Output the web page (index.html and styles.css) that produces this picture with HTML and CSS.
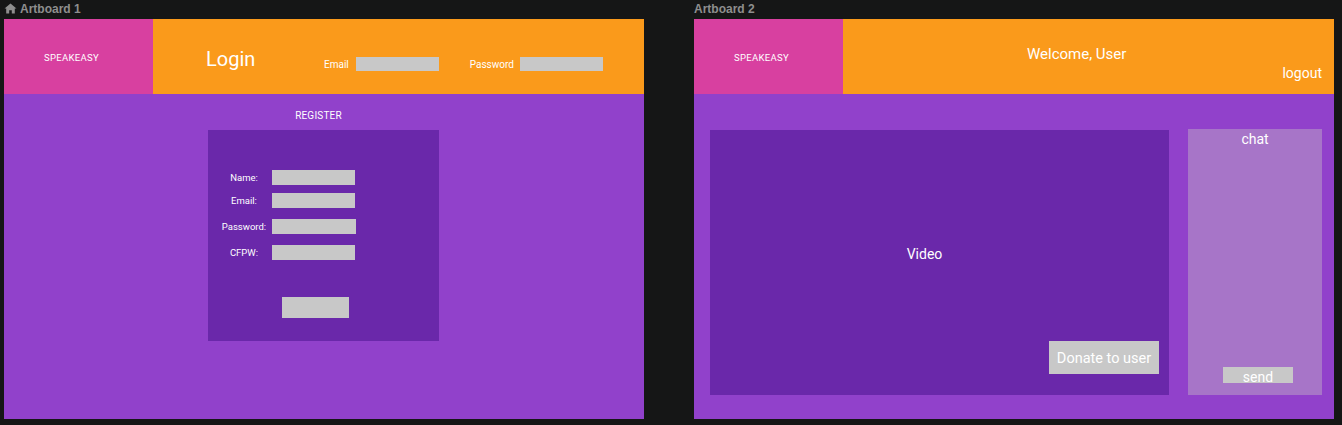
FILE: index.html
```html
<!DOCTYPE html>
<html>
<head>
<meta charset="utf-8">
<link rel="stylesheet" href="styles.css">
</head>
<body>
<div class="canvas">
  <section class="board">
    <div class="board-label">
      <svg class="home" width="13" height="11" viewBox="0 0 13 11"><path d="M6.5 0.5 L0.5 5.5 H2.2 V10.5 H5.2 V7.2 H7.8 V10.5 H10.8 V5.5 H12.5 Z" fill="#8e8e8e"/></svg>
      <span>Artboard 1</span>
    </div>
    <div class="frame">
      <header class="top">
        <div class="brand">SPEAKEASY</div>
        <div class="bar bar-login">
          <div class="login-title">Login</div>
          <div class="field field-email"><span>Email</span><div class="input"></div></div>
          <div class="field field-pass"><span>Password</span><div class="input"></div></div>
        </div>
      </header>
      <main class="content content-login">
        <div class="register">
          <div class="register-title">REGISTER</div>
          <div class="register-box">
            <div class="rows">
              <div class="row r1"><span class="lbl">Name:</span><div class="input"></div></div>
              <div class="row r2"><span class="lbl">Email:</span><div class="input"></div></div>
              <div class="row r3"><span class="lbl">Password:</span><div class="input wide"></div></div>
              <div class="row r4"><span class="lbl">CFPW:</span><div class="input"></div></div>
            </div>
            <div class="submit"></div>
          </div>
        </div>
      </main>
    </div>
  </section>

  <section class="board">
    <div class="board-label"><span>Artboard 2</span></div>
    <div class="frame">
      <header class="top">
        <div class="brand">SPEAKEASY</div>
        <div class="bar bar-user">
          <div class="welcome">Welcome, User</div>
          <div class="logout">logout</div>
        </div>
      </header>
      <main class="content content-stream">
        <div class="video">
          <div class="video-label">Video</div>
          <div class="donate">Donate to user</div>
        </div>
        <div class="chat">
          <div class="chat-title">chat</div>
          <div class="send">send</div>
        </div>
      </main>
    </div>
  </section>
</div>
</body>
</html>
```

FILE: styles.css
```css
* { box-sizing: border-box; }
html, body { margin: 0; padding: 0; }
body {
  background: #151616;
  width: 1342px;
  height: 425px;
  overflow: hidden;
  font-family: "Roboto", "Liberation Sans", sans-serif;
  color: #ffffff;
}
.canvas {
  display: flex;
  gap: 50px;
  padding-left: 4px;
}
.board { width: 640px; display: flex; flex-direction: column; }
.board-label {
  height: 19px;
  display: flex;
  align-items: center;
  gap: 3px;
  padding-bottom: 2px;
  font-family: "Liberation Sans", Arial, sans-serif;
  font-weight: bold;
  font-size: 12px;
  color: #8e8e8e;
}
.home { display: block; margin-top: -1px; }
.frame {
  width: 640px;
  height: 400px;
  background: #9141cb;
  display: flex;
  flex-direction: column;
}
.top { height: 75px; display: flex; }
.brand {
  width: 149px;
  background: #d840a0;
  display: flex;
  align-items: center;
  justify-content: center;
  font-size: 9.5px;
  letter-spacing: 0.3px;
  padding-top: 2px;
  padding-right: 14px;
}
.bar { flex: 1; background: #fa9a1b; }

/* login header */
.bar-login { display: flex; align-items: flex-start; padding-left: 53px; }
.login-title { font-size: 20px; margin-top: 28px; width: 49px; }
.field { display: flex; align-items: center; margin-top: 38px; font-size: 10px; }
.field .input { width: 83px; height: 14px; background: #c8c8c8; }
.field-email { margin-left: 69px; }
.field-email span { margin-right: 7px; }
.field-pass { margin-left: 31px; }
.field-pass span { margin-right: 6px; }

/* register */
.content { flex: 1; }
.content-login { padding-left: 204px; }
.register { width: 231px; display: flex; flex-direction: column; }
.register-title {
  height: 36px;
  font-size: 10px;
  text-align: center;
  padding-right: 10px;
  padding-top: 16px;
  letter-spacing: 0.2px;
}
.register-box {
  height: 211px;
  background: #6a28aa;
  display: flex;
  flex-direction: column;
  padding-top: 40px;
}
.rows { display: flex; flex-direction: column; }
.row { display: flex; align-items: center; height: 15px; }
.r2 { margin-top: 8px; }
.r3 { margin-top: 11px; }
.r4 { margin-top: 11px; }
.lbl { width: 54px; margin-left: 9px; text-align: center; font-size: 9.5px; }
.row .input { width: 83px; height: 15px; background: #c8c8c8; margin-left: 1px; }
.row .input.wide { width: 84px; }
.submit { width: 67px; height: 21px; background: #c8c8c8; margin-left: 74px; margin-top: 37px; }

/* artboard 2 */
.bar-user { display: flex; flex-direction: column; padding-left: 184px; padding-right: 12px; }
.welcome { font-size: 15px; margin-top: 26px; }
.logout { font-size: 14px; align-self: flex-end; margin-top: 2px; }
.content-stream { display: flex; padding: 35px 12px 24px 16px; }
.video {
  width: 459px;
  margin-top: 1px;
  background: #6a28aa;
  display: flex;
  flex-direction: column;
  align-items: center;
  position: relative;
}
.video-label { font-size: 14px; margin-top: 116px; margin-right: 30px; }
.donate {
  position: absolute;
  right: 10px;
  bottom: 21px;
  width: 110px;
  height: 33px;
  background: #c8c8c8;
  font-size: 14.5px;
  display: flex;
  align-items: center;
  justify-content: center;
  padding-top: 2px;
}
.chat {
  width: 134px;
  margin-left: 19px;
  background: #a775c8;
  display: flex;
  flex-direction: column;
  align-items: center;
}
.chat-title { font-size: 14px; margin-top: 2px; }
.send {
  margin-top: auto;
  margin-bottom: 12px;
  margin-left: 6px;
  width: 70px;
  height: 16px;
  background: #c8c8c8;
  font-size: 14px;
  text-align: center;
  line-height: 20px;
}
```
